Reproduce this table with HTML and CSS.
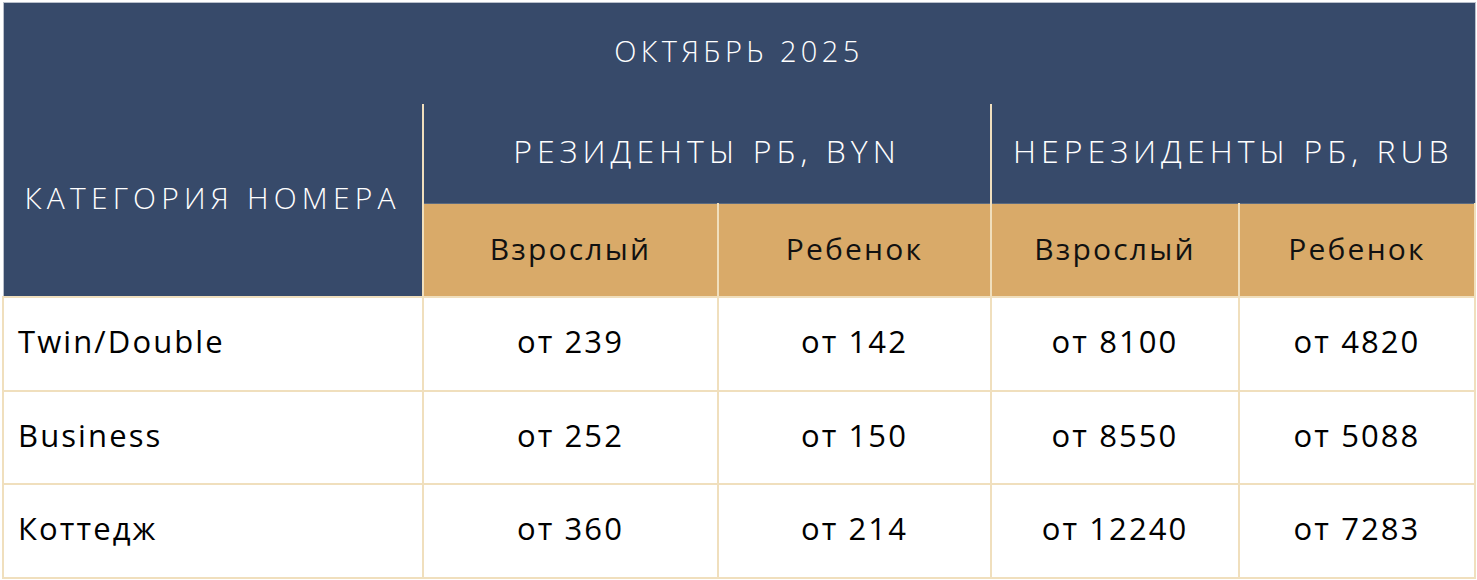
FILE: index.html
```html
<!DOCTYPE html>
<html lang="ru">
<head>
<meta charset="utf-8">
<title>Цены октябрь 2025</title>
<link rel="stylesheet" href="styles.css">
</head>
<body>
<table class="prices">
  <colgroup>
    <col class="c1"><col class="c2"><col class="c3"><col class="c4"><col class="c5">
  </colgroup>
  <thead>
    <tr class="r-title">
      <th colspan="5" class="title">ОКТЯБРЬ 2025</th>
    </tr>
    <tr class="r-group">
      <th rowspan="2" class="cat">КАТЕГОРИЯ НОМЕРА</th>
      <th colspan="2" class="group">РЕЗИДЕНТЫ РБ, BYN</th>
      <th colspan="2" class="group">НЕРЕЗИДЕНТЫ РБ, RUB</th>
    </tr>
    <tr class="r-sub">
      <th class="sub">Взрослый</th>
      <th class="sub">Ребенок</th>
      <th class="sub">Взрослый</th>
      <th class="sub">Ребенок</th>
    </tr>
  </thead>
  <tbody>
    <tr>
      <td class="name">Twin/Double</td>
      <td>от 239</td><td>от 142</td><td>от 8100</td><td>от 4820</td>
    </tr>
    <tr>
      <td class="name">Business</td>
      <td>от 252</td><td>от 150</td><td>от 8550</td><td>от 5088</td>
    </tr>
    <tr>
      <td class="name">Коттедж</td>
      <td>от 360</td><td>от 214</td><td>от 12240</td><td>от 7283</td>
    </tr>
  </tbody>
</table>
</body>
</html>
```

FILE: styles.css
```css
html, body {
  margin: 0;
  padding: 0;
  background: #ffffff;
}

body {
  padding: 2px;
  font-family: "Open Sans", Lato, "Liberation Sans", sans-serif;
}

.prices {
  width: 1472px;
  border-collapse: collapse;
  table-layout: fixed;
}

.c1 { width: 420px; }
.c2 { width: 295px; }
.c3 { width: 273px; }
.c4 { width: 248px; }
.c5 { width: 236px; }

.prices th {
  font-weight: 300;
  padding: 0 0 5px 0;
}

.r-title { height: 101px; }
.r-group { height: 100px; }
.r-sub { height: 93px; }

.title {
  background: #374a6a;
  color: #ffffff;
  font-size: 29px;
  letter-spacing: 4.4px;
  text-align: center;
  border-top: 1px solid #b9c0cc;
  border-left: 1px solid #b9c0cc;
  border-right: 1px solid #b9c0cc;
}

.cat {
  background: #374a6a;
  color: #ffffff;
  font-size: 30px;
  letter-spacing: 5.2px;
  text-align: left;
  padding-left: 21px !important;
  border-left: 1px solid #b9c0cc;
  border-right: 2px solid #f0dfbd;
}

.group {
  background: #374a6a;
  color: #ffffff;
  font-size: 32px;
  letter-spacing: 5px;
  text-align: center;
  border-left: 2px solid #f0dfbd;
  border-right: 1px solid #b9c0cc;
  border-bottom: 1px solid #5c6b80;
}

.prices th.sub {
  background: #d9aa69;
  color: #111111;
  font-size: 30px;
  font-weight: 400;
  letter-spacing: 2.2px;
  text-align: center;
  padding-bottom: 2px;
  border-left: 2px solid #f0dfbd;
  border-right: 2px solid #f0dfbd;
}

.prices tbody tr { height: 94px; }
.prices tbody tr:nth-child(2) { height: 93px; }

.prices td {
  border: 2px solid #f0dfbd;
  font-size: 31px;
  font-weight: 400;
  letter-spacing: 2.1px;
  color: #000000;
  text-align: center;
  padding: 0 0 5px 0;
}

.prices td.name {
  text-align: left;
  padding-left: 14px;
}
```
